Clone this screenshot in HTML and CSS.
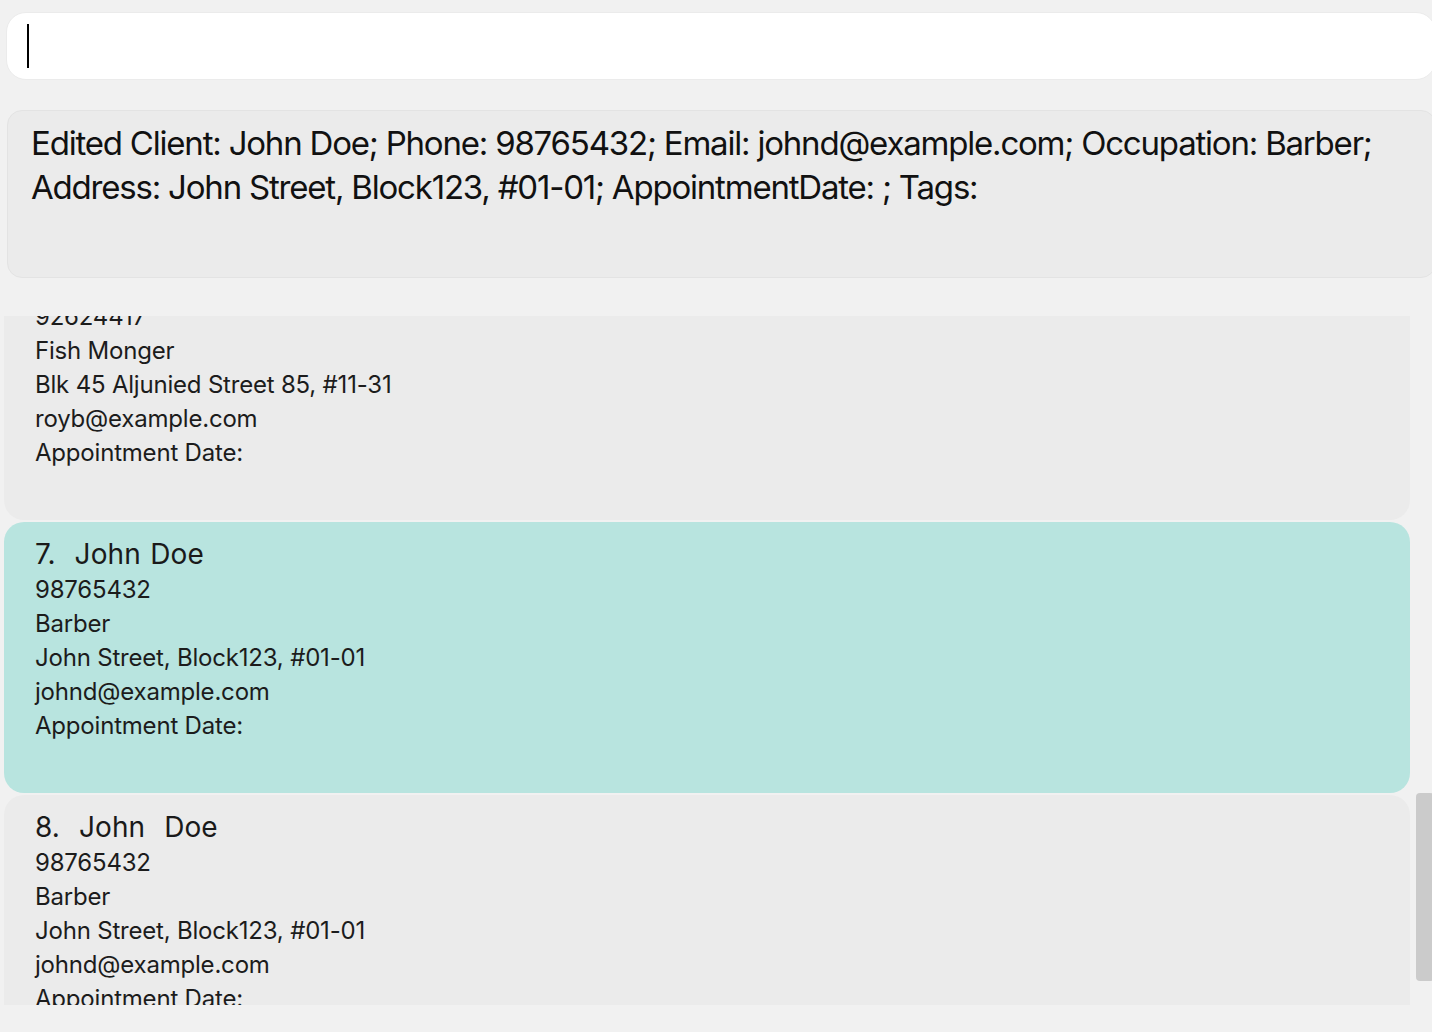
FILE: index.html
```html
<!DOCTYPE html>
<html lang="en">
<head>
<meta charset="utf-8">
<title>Client Book</title>
<link rel="stylesheet" href="styles.css">
</head>
<body>
<div class="app">
  <div class="command"><span class="caret"></span></div>
  <div class="result">Edited Client: John Doe; Phone: 98765432; Email: johnd@example.com; Occupation: Barber; Address: John Street, Block123, #01-01; AppointmentDate: ; Tags:</div>
  <div class="list-panel">
    <div class="list-viewport">
      <div class="list" style="margin-top:-67px">
        <div class="card">
          <div class="name">6.  Roy Balakrishnan</div>
          <div class="field">92624417</div>
          <div class="field">Fish Monger</div>
          <div class="field">Blk 45 Aljunied Street 85, #11-31</div>
          <div class="field">royb@example.com</div>
          <div class="field">Appointment Date: </div>
        </div>
        <div class="card selected">
          <div class="name">7.  John Doe</div>
          <div class="field">98765432</div>
          <div class="field">Barber</div>
          <div class="field">John Street, Block123, #01-01</div>
          <div class="field">johnd@example.com</div>
          <div class="field">Appointment Date: </div>
        </div>
        <div class="card">
          <div class="name">8.  John  Doe</div>
          <div class="field">98765432</div>
          <div class="field">Barber</div>
          <div class="field">John Street, Block123, #01-01</div>
          <div class="field">johnd@example.com</div>
          <div class="field">Appointment Date: </div>
        </div>
      </div>
    </div>
    <div class="scroll-track"><div class="scroll-thumb" style="margin-top:477px;height:188px"></div></div>
  </div>
</div>
</body>
</html>
```
FILE: styles.css
```css
html, body {
  margin: 0;
  padding: 0;
  background: #f1f1f1;
  overflow: hidden;
}

body {
  font-family: Inter, "Noto Sans", "Liberation Sans", sans-serif;
  color: #1c1c1c;
  width: 1432px;
  height: 1032px;
}

.app {
  display: flex;
  flex-direction: column;
  padding-top: 12px;
}

.command {
  margin-left: 6px;
  width: 1430px;
  height: 68px;
  box-sizing: border-box;
  background: #ffffff;
  border: 1px solid #ebebeb;
  border-radius: 20px;
  padding: 11px 0 0 20px;
}

.caret {
  display: block;
  width: 2px;
  height: 44px;
  background: #000;
}

.result {
  margin-top: 30px;
  margin-left: 7px;
  width: 1429px;
  height: 168px;
  box-sizing: border-box;
  background: #ebebeb;
  border: 1px solid #e3e3e3;
  border-radius: 15px;
  padding: 10px 30px 0 23px;
  font-size: 33px;
  line-height: 44px;
  color: #111;
  letter-spacing: -1.2px;
}

.list-panel {
  margin-top: 38px;
  display: flex;
  height: 689px;
  gap: 6px;
}

.list-viewport {
  margin-left: 4px;
  width: 1406px;
  overflow: hidden;
  height: 689px;
}

.list {
  display: flex;
  flex-direction: column;
  gap: 2px;
}

.card {
  height: 271px;
  box-sizing: border-box;
  background: #ebebeb;
  border-radius: 20px;
  padding: 13px 0 0 31px;
}

.card.selected {
  background: #b8e4df;
}

.name {
  font-size: 28px;
  line-height: 38px;
  color: #1a1a1a;
  white-space: pre;
  letter-spacing: 0.1px;
  word-spacing: 1.5px;
}

.field {
  font-size: 24px;
  line-height: 34px;
  color: #1c1c1c;
  letter-spacing: -0.2px;
  white-space: pre;
}

.scroll-track {
  width: 16px;
  flex: none;
}

.scroll-thumb {
  width: 18px;
  background: #cbcbcb;
  border-radius: 4px;
}
```
